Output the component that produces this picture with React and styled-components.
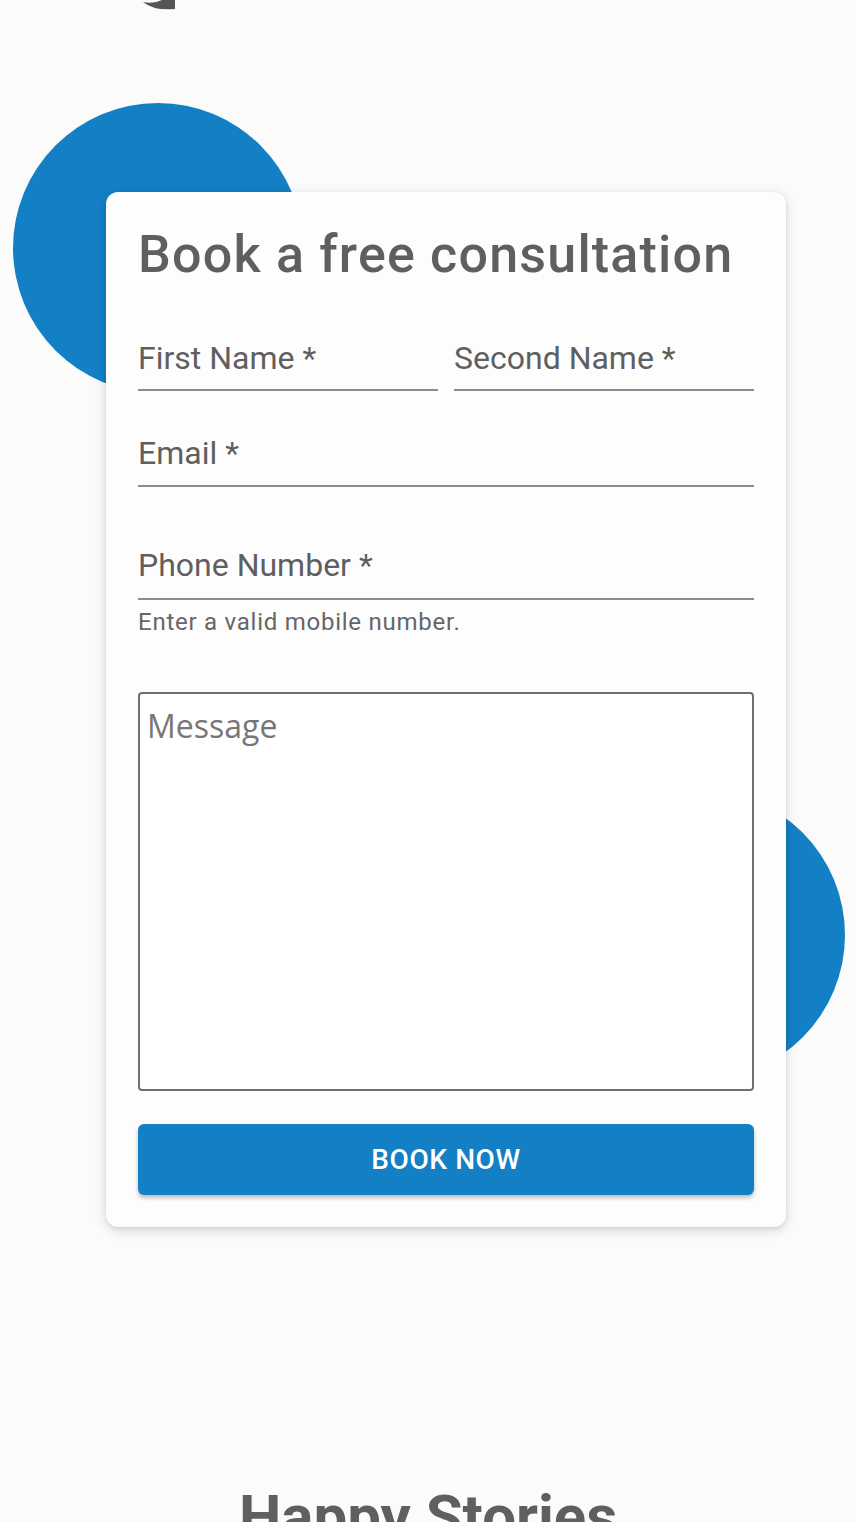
import React from "react";
import styled, { createGlobalStyle } from "styled-components";

const GlobalStyle = createGlobalStyle`
  html, body {
    margin: 0;
    padding: 0;
    background: #fbfbfb;
  }
  body {
    font-family: Roboto, "Liberation Sans", sans-serif;
    color: #5f5f5f;
    overflow: hidden;
  }
  * {
    box-sizing: border-box;
  }
`;

const Page = styled.div`
  width: 856px;
  height: 1522px;
  overflow: hidden;
  display: flex;
  flex-direction: column;
`;

const TopBar = styled.div`
  height: 10px;
  padding-left: 140px;
  display: flex;
  align-items: flex-start;
`;

const Section = styled.section`
  position: relative;
  display: flex;
  justify-content: center;
  padding: 182px 0 0 36px;
`;

const Circle = styled.div`
  position: absolute;
  width: 290px;
  height: 290px;
  border-radius: 50%;
  background: #1380c6;
  left: ${(p) => p.$left}px;
  top: ${(p) => p.$top}px;
`;

const Card = styled.form`
  position: relative;
  z-index: 1;
  width: 680px;
  padding: 32px;
  background: #fdfdfd;
  border-radius: 12px;
  box-shadow: 0 3px 12px rgba(0, 0, 0, 0.16), 0 1px 3px rgba(0, 0, 0, 0.08);
  display: flex;
  flex-direction: column;
`;

const Title = styled.h2`
  margin: 0;
  font-size: 52px;
  line-height: 62px;
  font-weight: 500;
  letter-spacing: 1.2px;
  color: #5f5f5f;
`;

const Row = styled.div`
  display: flex;
  gap: 16px;
  margin-top: ${(p) => p.$mt || 0}px;
`;

const Field = styled.div`
  flex: 1;
  padding-bottom: ${(p) => p.$pb || 12}px;
  border-bottom: 2px solid #8c8c8c;
`;

const Label = styled.span`
  display: block;
  font-size: 32px;
  line-height: 38px;
  color: #5f5f5f;
`;

const Helper = styled.div`
  margin-top: 8px;
  font-size: 24px;
  line-height: 28px;
  letter-spacing: 0.75px;
  color: #666;
`;

const Message = styled.div`
  margin-top: 56px;
  height: 399px;
  border: 2px solid #707070;
  border-radius: 4px;
  background: #fff;
  padding: 12px 7px;
  font-family: "Open Sans", sans-serif;
  font-size: 32px;
  line-height: 40px;
  color: #777;
`;

const Button = styled.button`
  margin-top: 33px;
  height: 71px;
  border: none;
  border-radius: 6px;
  background: #1380c6;
  color: #fff;
  font-family: Roboto, sans-serif;
  font-size: 28px;
  font-weight: 500;
  letter-spacing: 0.6px;
  text-transform: uppercase;
  box-shadow: 0 3px 4px rgba(0, 0, 0, 0.25);
  cursor: pointer;
`;

const Stories = styled.h2`
  margin: 254px 0 0;
  text-align: center;
  font-size: 60px;
  line-height: 72px;
  font-weight: 700;
  color: #5f5f5f;
`;

const LogoTail = () => (
  <svg width="40" height="10" viewBox="0 0 40 10">
    <path d="M3 2 Q14 11 35 9 L35 0 L22 0 Q14 4 3 2 Z" fill="#555" />
  </svg>
);

export default function App() {
  return (
    <Page>
      <GlobalStyle />
      <TopBar>
        <LogoTail />
      </TopBar>
      <Section>
        <Circle $left={13} $top={93} />
        <Circle $left={555} $top={780} />
        <Card onSubmit={(e) => e.preventDefault()}>
          <Title>Book a free consultation</Title>
          <Row $mt={53}>
            <Field>
              <Label>First Name *</Label>
            </Field>
            <Field>
              <Label>Second Name *</Label>
            </Field>
          </Row>
          <Row $mt={43}>
            <Field $pb={13}>
              <Label>Email *</Label>
            </Field>
          </Row>
          <Row $mt={59}>
            <Field $pb={14}>
              <Label>Phone Number *</Label>
            </Field>
          </Row>
          <Helper>Enter a valid mobile number.</Helper>
          <Message>Message</Message>
          <Button type="submit">Book now</Button>
        </Card>
      </Section>
      <Stories>Happy Stories</Stories>
    </Page>
  );
}
